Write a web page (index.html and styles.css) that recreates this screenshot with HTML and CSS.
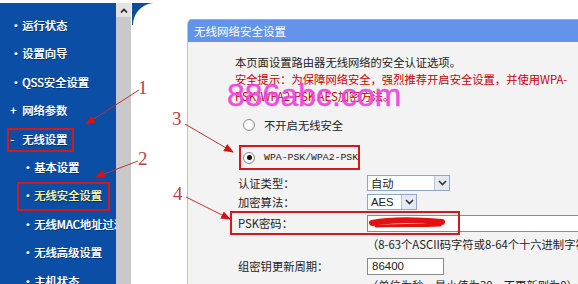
FILE: index.html
```html
<!DOCTYPE html>
<html lang="zh-CN">
<head>
  <meta charset="UTF-8" />
  <meta name="viewport" content="width=device-width, initial-scale=1.0" />
  <title>无线网络安全设置</title>
  <link rel="stylesheet" href="styles.css">
</head>
<body>
  <div class="page">
    <nav class="menu">
      <ul>
        <li><span class="mark">•</span>运行状态</li>
        <li><span class="mark">•</span>设置向导</li>
        <li><span class="mark">•</span>QSS安全设置</li>
        <li><span class="mark">+</span>网络参数</li>
        <li><span class="mark">-</span>无线设置</li>
        <li class="sub"><span class="mark">•</span>基本设置</li>
        <li class="sub current"><span class="mark">•</span>无线安全设置</li>
        <li class="sub"><span class="mark">•</span>无线MAC地址过滤</li>
        <li class="sub"><span class="mark">•</span>无线高级设置</li>
        <li class="sub"><span class="mark">•</span>主机状态</li>
      </ul>
    </nav>

    <div class="scrollbar">
      <div class="scroll-up">
        <svg width="8" height="5" viewBox="0 0 8 5"><polyline points="1,4.5 4,1.5 7,4.5" fill="none" stroke="#222" stroke-width="1.6"/></svg>
      </div>
    </div>

    <div class="main">
      <div class="corner"></div>
      <div class="panel">
        <div class="panel-title">无线网络安全设置</div>
        <div class="panel-body">
          <p class="intro">本页面设置路由器无线网络的安全认证选项。</p>
          <p class="warn">安全提示：为保障网络安全，强烈推荐开启安全设置，并使用WPA-<br>PSK/WPA2-PSK AES加密方法。</p>

          <div class="opt"><span class="radio"></span>不开启无线安全</div>
          <div class="opt opt-wpa"><span class="radio on"></span><span class="mono">WPA-PSK/WPA2-PSK</span></div>

          <div class="field f-auth">
            <label>认证类型：</label>
            <div class="select w-auto">
              <span>自动</span>
              <i class="drop"><svg width="9" height="6" viewBox="0 0 9 6"><polyline points="1,1 4.5,4.5 8,1" fill="none" stroke="#333" stroke-width="1.6"/></svg></i>
            </div>
          </div>
          <div class="field f-cipher">
            <label>加密算法：</label>
            <div class="select w-aes">
              <span>AES</span>
              <i class="drop"><svg width="9" height="6" viewBox="0 0 9 6"><polyline points="1,1 4.5,4.5 8,1" fill="none" stroke="#333" stroke-width="1.6"/></svg></i>
            </div>
          </div>
          <div class="field f-psk">
            <label>PSK密码：</label>
            <div class="input w-psk"></div>
          </div>
          <div class="hint">（8-63个ASCII码字符或8-64个十六进制字符）</div>
          <div class="field f-group">
            <label>组密钥更新周期：</label>
            <div class="input w-num">86400</div>
          </div>
          <div class="hint">（单位为秒，最小值为30，不更新则为0）</div>
        </div>
      </div>
    </div>
  </div>

  <!-- annotations drawn on top of the screenshot -->
  <svg class="marks" width="578" height="284" viewBox="0 0 578 284">
    <defs>
      <marker id="head" markerWidth="10" markerHeight="8" refX="9" refY="4" orient="auto" markerUnits="userSpaceOnUse">
        <polygon points="0,0 10,4 0,8" fill="#d01515"/>
      </marker>
    </defs>
    <text class="wm" x="227" y="106">886abc.com</text>

    <rect class="box" x="8" y="129" width="65" height="22"/>
    <rect class="box" x="18" y="183" width="91" height="27"/>
    <rect class="box" x="240" y="146" width="119" height="23"/>
    <rect class="box" x="231" y="212" width="228" height="22"/>

    <path class="scribble" d="M372 223 C 392 219, 420 220, 442 222"/>
    <path class="scribble thin" d="M376 226 C 396 225, 420 226, 440 225"/>

    <line class="arrow" x1="139" y1="90" x2="86" y2="124" marker-end="url(#head)"/>
    <line class="arrow" x1="138" y1="161" x2="96" y2="177" marker-end="url(#head)"/>
    <line class="arrow" x1="185" y1="124" x2="233" y2="152" marker-end="url(#head)"/>
    <line class="arrow" x1="186" y1="197" x2="230" y2="219" marker-end="url(#head)"/>

    <text class="num" x="138" y="94">1</text>
    <text class="num" x="138" y="165">2</text>
    <text class="num" x="172" y="125">3</text>
    <text class="num" x="173" y="200">4</text>
  </svg>
</body>
</html>
```

FILE: styles.css
```css
* {
  box-sizing: border-box;
}
body {
  margin: 0;
  width: 578px;
  height: 284px;
  overflow: hidden;
  position: relative;
  background: #fff;
  font-family: "Noto Sans CJK SC", sans-serif;
  font-size: 11.3px;
  color: #222;
}
.page {
  display: flex;
  height: 284px;
  padding-top: 3px;
}

/* left menu */
.menu {
  flex: none;
  width: 116px;
  background: #0a4ea6;
  overflow: hidden;
  white-space: nowrap;
}
.menu ul {
  list-style: none;
  margin: 0;
  padding: 8px 0 0;
}
.menu li {
  display: flex;
  height: 28.4px;
  line-height: 28.4px;
  padding-left: 10px;
  color: #fff;
  text-shadow: 0.4px 0 0 currentColor, 1px 1px 0 rgba(0, 20, 60, 0.6);
}
.menu li .mark {
  width: 12px;
  flex: none;
}
.menu li.sub {
  padding-left: 22px;
}
.menu li.current {
  color: #f4f3a6;
  text-shadow: 0.4px 0 0 currentColor, 1px 1px 1px #14243a;
}

.scrollbar {
  flex: none;
  width: 15px;
  background: #c9c9c9;
}
.scroll-up {
  height: 14px;
  background: #e3e3e3;
  display: flex;
  align-items: center;
  justify-content: center;
}

/* right frame */
.main {
  flex: 1;
  min-width: 0;
  display: flex;
  align-items: flex-start;
}
.corner {
  flex: none;
  width: 23px;
  height: 22px;
  margin-left: 1px;
  background: radial-gradient(circle at 100% 100%, #fff 21.5px, #0d4c9d 22.5px);
}
.panel {
  flex: 1;
  min-width: 0;
  height: 265px;
  margin: 16px 0 0 32px;
  border-left: 1px solid #dbc08a;
  border-top-left-radius: 5px;
  overflow: hidden;
  display: flex;
  flex-direction: column;
}
.panel-title {
  height: 23px;
  line-height: 23px;
  padding-left: 6px;
  background: #6394ea;
  border-top: 1px solid #8fb0ea;
  color: #fff;
  font-size: 11.5px;
}
.panel-body {
  flex: 1;
  background: #f3f3f3;
  padding: 12px 0 0 42px;
  white-space: nowrap;
}
.panel-body p {
  margin: 0 0 0 5px;
  line-height: 17px;
}
.warn {
  color: #c80000;
}

.opt {
  display: flex;
  align-items: center;
  height: 20px;
  margin-top: 10px;
  padding-left: 13px;
}
.opt-wpa {
  height: 25px;
}
.radio {
  width: 12px;
  height: 12px;
  margin-right: 9px;
  border-radius: 50%;
  border: 1px solid #8c8c8c;
  background: radial-gradient(circle at 40% 40%, #fff 40%, #dcdcdc);
  display: flex;
  align-items: center;
  justify-content: center;
}
.radio.on::after {
  content: "";
  width: 5px;
  height: 5px;
  border-radius: 50%;
  background: #111;
}
.mono {
  font-family: "Liberation Mono", monospace;
  font-size: 9.8px;
}

.field {
  display: flex;
  align-items: center;
  height: 18px;
  padding-left: 8px;
}
.field label {
  width: 129px;
  flex: none;
}
.f-auth {
  margin-top: 4px;
}
.f-cipher {
  margin-top: 1px;
}
.f-psk {
  height: 24px;
}
.f-group {
  margin-top: 4px;
}

.select {
  display: flex;
  align-items: center;
  justify-content: space-between;
  height: 16px;
  padding-left: 3px;
  background: #fff;
  border: 1px solid #8fa6c2;
}
.w-auto {
  width: 83px;
}
.w-aes {
  width: 50px;
  font-family: "Liberation Sans", sans-serif;
}
.drop {
  width: 15px;
  height: 14px;
  display: flex;
  align-items: center;
  justify-content: center;
  background: #e3eaf5;
  border-left: 1px solid #b4c4dc;
}
.input {
  height: 17px;
  line-height: 15px;
  padding-left: 4px;
  background: #fff;
  border: 1px solid #8a8a8a;
  font-family: "Liberation Sans", sans-serif;
  font-size: 11.5px;
}
.w-psk {
  width: 230px;
  flex: none;
}
.w-num {
  width: 77px;
}
.hint {
  height: 18px;
  line-height: 18px;
  margin-left: 137px;
}
.f-group + .hint {
  margin-top: 1px;
}

/* annotation layer */
.marks {
  position: absolute;
  top: 0;
  left: 0;
  pointer-events: none;
}
.wm {
  font-family: "Liberation Sans", sans-serif;
  font-size: 32px;
  fill: #ee3ee0;
  stroke: #ee3ee0;
  stroke-width: 0.5;
  opacity: 0.9;
}
.box {
  fill: none;
  stroke: #d2191b;
  stroke-width: 2;
}
.scribble {
  fill: none;
  stroke: #e01212;
  stroke-width: 6;
  stroke-linecap: round;
}
.scribble.thin {
  stroke-width: 3;
}
.arrow {
  stroke: #b83636;
  stroke-width: 1;
}
.num {
  font-family: "Liberation Serif", serif;
  font-size: 19px;
  fill: #b04545;
}
```
